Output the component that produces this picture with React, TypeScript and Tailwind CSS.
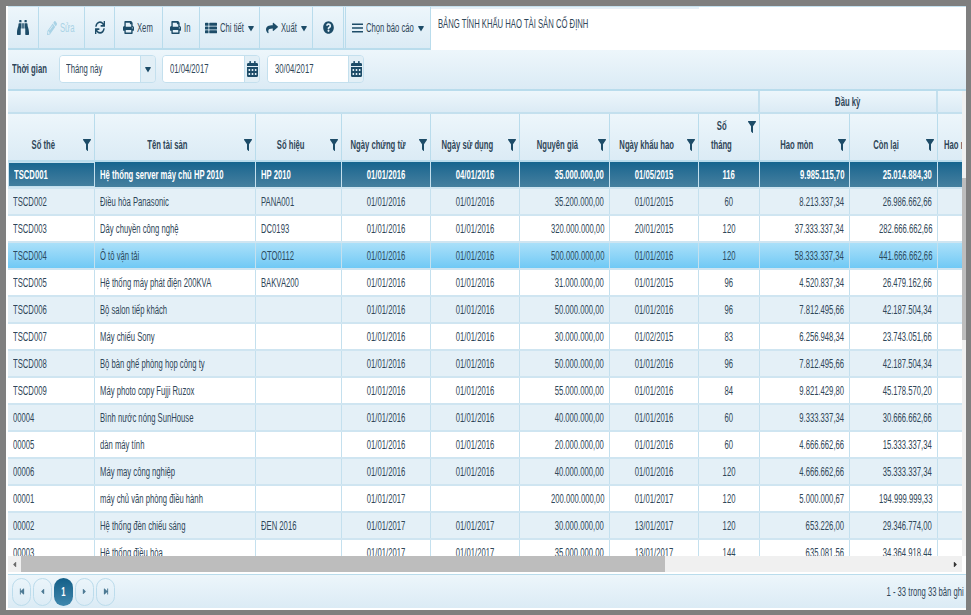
import React from 'react';
import {
  FaBinoculars, FaPencilAlt, FaSync, FaPrint, FaThList, FaShare, FaQuestionCircle, FaBars, FaFilter,
  FaCalendarAlt, FaStepBackward, FaStepForward, FaCaretLeft, FaCaretRight, FaCaretDown,
} from 'react-icons/fa';

const GRID = 'grid grid-cols-[87px_161px_86px_89px_89px_90px_89px_61px_90px_88px_24px] w-[954px]';
const BAR = 'bg-gradient-to-b from-[#edf6fb] to-[#dbebf5]';

const ORIGIN = { left: 'origin-left', center: 'origin-center', right: 'origin-right' };

// the screenshot is squeezed sideways, so text is narrowed the same way
function T({ children, align = 'left', className = '' }: { children: React.ReactNode; align?: 'left' | 'center' | 'right'; className?: string }) {
  return (
    <span className={`inline-block shrink-0 whitespace-nowrap text-[12px] scale-x-[0.64] ${ORIGIN[align]} ${className}`}>
      {children}
    </span>
  );
}

const HEADERS = [
  { label: 'Số thẻ' },
  { label: 'Tên tài sản' },
  { label: 'Số hiệu' },
  { label: 'Ngày chứng từ' },
  { label: 'Ngày sử dụng' },
  { label: 'Nguyên giá' },
  { label: 'Ngày khấu hao' },
  { label: 'Số', label2: 'tháng' },
  { label: 'Hao mòn' },
  { label: 'Còn lại' },
];

const ROWS = [
  ['TSCD001', 'Hệ thống server máy chủ HP 2010', 'HP 2010', '01/01/2016', '04/01/2016', '35.000.000,00', '01/05/2015', '116', '9.985.115,70', '25.014.884,30'],
  ['TSCD002', 'Điều hòa Panasonic', 'PANA001', '01/01/2016', '01/01/2016', '35.200.000,00', '01/01/2015', '60', '8.213.337,34', '26.986.662,66'],
  ['TSCD003', 'Dây chuyền công nghệ', 'DC0193', '01/01/2016', '01/01/2016', '320.000.000,00', '20/01/2015', '120', '37.333.337,34', '282.666.662,66'],
  ['TSCD004', 'Ô tô vận tải', 'OTO0112', '01/01/2016', '01/01/2016', '500.000.000,00', '01/01/2016', '120', '58.333.337,34', '441.666.662,66'],
  ['TSCD005', 'Hệ thống máy phát điện 200KVA', 'BAKVA200', '01/01/2016', '01/01/2016', '31.000.000,00', '01/01/2015', '96', '4.520.837,34', '26.479.162,66'],
  ['TSCD006', 'Bộ salon tiếp khách', '', '01/01/2016', '01/01/2016', '50.000.000,00', '01/01/2016', '96', '7.812.495,66', '42.187.504,34'],
  ['TSCD007', 'Máy chiếu Sony', '', '01/01/2016', '01/01/2016', '30.000.000,00', '01/02/2015', '83', '6.256.948,34', '23.743.051,66'],
  ['TSCD008', 'Bộ bàn ghế phòng họp công ty', '', '01/01/2016', '01/01/2016', '50.000.000,00', '01/01/2016', '96', '7.812.495,66', '42.187.504,34'],
  ['TSCD009', 'Máy photo copy Fujji Ruzox', '', '01/01/2016', '01/01/2016', '55.000.000,00', '01/01/2016', '84', '9.821.429,80', '45.178.570,20'],
  ['00004', 'Bình nước nóng SunHouse', '', '01/01/2016', '01/01/2016', '40.000.000,00', '01/01/2016', '60', '9.333.337,34', '30.666.662,66'],
  ['00005', 'dàn máy tính', '', '01/01/2016', '01/01/2016', '20.000.000,00', '01/01/2016', '60', '4.666.662,66', '15.333.337,34'],
  ['00006', 'Máy may công nghiệp', '', '01/01/2016', '01/01/2016', '40.000.000,00', '01/01/2016', '120', '4.666.662,66', '35.333.337,34'],
  ['00001', 'máy chủ văn phòng điều hành', '', '01/01/2017', '', '200.000.000,00', '01/01/2017', '120', '5.000.000,67', '194.999.999,33'],
  ['00002', 'Hệ thống đèn chiếu sáng', 'ĐEN 2016', '01/01/2017', '01/01/2017', '30.000.000,00', '13/01/2017', '120', '653.226,00', '29.346.774,00'],
  ['00003', 'Hệ thống điều hòa', '', '01/01/2017', '01/01/2017', '35.000.000,00', '13/01/2017', '144', '635.081,56', '34.364.918,44'],
];

function ToolButton({ width, icon, label, labelWidth = '', caret, disabled }: { width: string; icon: React.ReactNode; label?: string; labelWidth?: string; caret?: boolean; disabled?: boolean }) {
  return (
    <div className={`${width} h-full flex items-center justify-center gap-[3px] border-r border-[#b9dcec] ${disabled ? 'text-[#a9d3e6]' : 'text-[#1d4c68]'}`}>
      {icon}
      {label && (
        <div className={`${labelWidth} flex`}>
          <T className={disabled ? 'text-[#a9d3e6]' : 'text-[#2f4658]'}>{label}</T>
        </div>
      )}
      {caret && <FaCaretDown className="w-[6px] h-[16px]" preserveAspectRatio="none" />}
    </div>
  );
}

function DateBox({ value, width }: { value: string; width: string }) {
  return (
    <div className={`${width} h-[28px] flex rounded-[4px] border border-[#c4e0ee] overflow-hidden`}>
      <div className="flex-1 min-w-0 bg-white flex items-center pl-[7px]"><T className="text-[#2f4658]">{value}</T></div>
      <div className="w-[15px] flex items-center justify-center border-l border-[#c4e0ee] bg-[#e2eff6]">
        <FaCalendarAlt className="w-[11px] h-[16px] text-[#1d4c68]" preserveAspectRatio="none" />
      </div>
    </div>
  );
}

function PageButton({ children, active }: { children: React.ReactNode; active?: boolean }) {
  return (
    <div
      className={`w-[19px] h-[28px] rounded-full flex items-center justify-center font-bold ${
        active ? 'bg-gradient-to-b from-[#125f88] to-[#3f88ae] text-white' : 'border border-[#bcdcec] text-[#4d7a94]'
      }`}
    >
      {children}
    </div>
  );
}

export default function App() {
  return (
    <div className="w-[971px] h-[615px] bg-[#7f7f7f] pt-[6px] pl-[6px] pr-[5px] pb-[5px] overflow-hidden font-['Liberation_Sans',Arial,sans-serif]">
      <div className="w-full h-full bg-white pl-[2px] pb-[2px] flex flex-col">
        {/* Thanh công cụ */}
        <div className="h-[44px] flex shrink-0 border-t border-[#c4e0ee]">
          <div className={`flex h-[43px] border-b-2 border-[#b9dcec] ${BAR}`}>
            <ToolButton width="w-[31px]" icon={<FaBinoculars className="w-[12px] h-[17px]" preserveAspectRatio="none" />} />
            <ToolButton width="w-[46px]" disabled icon={<FaPencilAlt className="w-[10px] h-[14px]" preserveAspectRatio="none" />} label="Sửa" labelWidth="w-[16px]" />
            <ToolButton width="w-[30px]" icon={<FaSync className="w-[10px] h-[13px]" preserveAspectRatio="none" />} />
            <ToolButton width="w-[48px]" icon={<FaPrint className="w-[11px] h-[13px]" preserveAspectRatio="none" />} label="Xem" labelWidth="w-[17px]" />
            <ToolButton width="w-[37px]" icon={<FaPrint className="w-[11px] h-[13px]" preserveAspectRatio="none" />} label="In" labelWidth="w-[8px]" />
            <ToolButton width="w-[60px]" icon={<FaThList className="w-[12px] h-[12px]" preserveAspectRatio="none" />} label="Chi tiết" labelWidth="w-[25px]" caret />
            <ToolButton width="w-[53px]" icon={<FaShare className="w-[12px] h-[12px]" preserveAspectRatio="none" />} label="Xuất" labelWidth="w-[17px]" caret />
            <ToolButton width="w-[31px]" icon={<FaQuestionCircle className="w-[11px] h-[13px]" preserveAspectRatio="none" />} />
            <div className="w-[86px] ml-[1px] border-l border-[#b9dcec]">
              <ToolButton width="w-full" icon={<FaBars className="w-[11px] h-[12px]" preserveAspectRatio="none" />} label="Chọn báo cáo" labelWidth="w-[49px]" caret />
            </div>
          </div>
          <div className="flex-1 bg-white pl-[7px] pt-[8px] leading-[16px] relative">
            <div className="absolute left-0 top-0 w-[268px] h-[2px] bg-[#e6f1f8]" />
            <T className="text-[#2f4658]">BẢNG TÍNH KHẤU HAO TÀI SẢN CỐ ĐỊNH</T>
          </div>
        </div>

        {/* Bộ lọc thời gian */}
        <div className={`h-[41px] shrink-0 flex items-center pb-[2px] border-b-2 border-[#b9dcec] ${BAR}`}>
          <div className="ml-[4px] w-[47px] flex"><T className="font-bold text-[#2f4658]">Thời gian</T></div>
          <div className="w-[97px] h-[28px] flex rounded-[4px] border border-[#c4e0ee] overflow-hidden">
            <div className="flex-1 min-w-0 bg-white flex items-center pl-[6px]"><T className="text-[#2f4658]">Tháng này</T></div>
            <div className="w-[15px] flex items-center justify-center border-l border-[#c4e0ee] bg-[#e2eff6]">
              <FaCaretDown className="w-[6px] h-[16px] text-[#1d4c68]" preserveAspectRatio="none" />
            </div>
          </div>
          <div className="ml-[6px]"><DateBox value="01/04/2017" width="w-[98px]" /></div>
          <div className="ml-[7px]"><DateBox value="30/04/2017" width="w-[97px]" /></div>
        </div>

        {/* Bảng dữ liệu */}
        <div className="flex-1 min-h-0 flex">
          <div className="flex-1 min-w-0 overflow-hidden">
            <div className={`${GRID} h-[23px] ${BAR} border-b-2 border-[#c4e0ee]`}>
              <div className="col-span-8 border-r-2 border-[#c4e0ee]" />
              <div className="col-span-2 flex items-center justify-center border-r-2 border-[#c4e0ee]"><T align="center" className="font-bold text-[#2f4658]">Đầu kỳ</T></div>
              <div />
            </div>
            <div className={`${GRID} h-[48px] ${BAR} border-b-2 border-[#b9dcec]`}>
              {HEADERS.map((h) => (
                <div key={h.label} className="flex border-r border-[#b9dcec] pr-[3px]">
                  <div className="flex-1 min-w-0 self-end pb-[5px] pr-[4px] flex flex-col items-center leading-[19px]">
                    <T align="center" className="font-bold text-[#2f4658]">{h.label}</T>
                    {h.label2 && <T align="center" className="font-bold text-[#2f4658]">{h.label2}</T>}
                  </div>
                  <FaFilter className={`w-[8px] h-[12px] text-[#1d4c68] shrink-0 self-end ${h.label2 ? 'mb-[27px]' : 'mb-[9px]'}`} preserveAspectRatio="none" />
                </div>
              ))}
              <div className="pl-[6px] pb-[5px] self-end leading-[19px] flex overflow-hidden"><T className="font-bold text-[#2f4658]">Hao mòn</T></div>
            </div>
            {ROWS.map((row, i) => {
              const selected = i === 0;
              const hovered = i === 3;
              const rowClass = selected
                ? 'bg-gradient-to-b from-[#14658f] to-[#45809f] text-white font-bold'
                : hovered
                  ? 'bg-gradient-to-b from-[#aae0f9] to-[#6fc9f5] text-[#2c4a5e]'
                  : i % 2 === 1
                    ? 'bg-[#e4f0f7] text-[#2f4658]'
                    : 'bg-white text-[#2f4658]';
              return (
                <div key={row[0]} className={`${GRID} h-[27px] border-b-2 border-[#cfe5f1] ${rowClass}`}>
                  {row.map((cell, c) => {
                    const align = c < 3 ? 'left' : c === 3 || c === 4 || c === 6 || c === 7 ? 'center' : 'right';
                    return (
                      <div
                        key={c}
                        className={`flex items-center overflow-hidden border-r border-[#c4e0ee] ${
                          align === 'left' ? 'justify-start pl-[5px]' : align === 'center' ? 'justify-center' : 'justify-end pr-[5px]'
                        } ${selected && c === 0 ? 'border border-[#5aa3c8]' : ''}`}
                      >
                        {cell && <T align={align}>{cell}</T>}
                      </div>
                    );
                  })}
                  <div />
                </div>
              );
            })}
          </div>
          <div className="w-[4px] shrink-0 bg-[#f0f0f0]">
            <div className="mt-[87px] h-[162px] bg-[#bdbdbd]" />
          </div>
        </div>

        {/* Thanh cuộn ngang */}
        <div className="h-[18px] shrink-0 pb-[2px] pr-[4px] bg-white">
          <div className="h-full flex items-center bg-[#f0f0f0] text-[#6b6b6b]">
            <div className="w-[13px] flex justify-center"><FaCaretLeft className="w-[7px] h-[9px]" /></div>
            <div className="w-[644px] h-full bg-[#bdbdbd]" />
            <div className="flex-1 flex justify-end pr-[3px] text-[#333333]"><FaCaretRight className="w-[7px] h-[9px]" /></div>
          </div>
        </div>

        {/* Phân trang */}
        <div className={`h-[34px] shrink-0 flex items-center justify-between border-t border-[#b9dcec] pl-[4px] pr-[2px] ${BAR}`}>
          <div className="flex items-center gap-[2px]">
            <PageButton><FaStepBackward className="w-[6px] h-[7px]" /></PageButton>
            <PageButton><FaCaretLeft className="w-[7px] h-[9px]" /></PageButton>
            <PageButton active><T align="center">1</T></PageButton>
            <PageButton><FaCaretRight className="w-[7px] h-[9px]" /></PageButton>
            <PageButton><FaStepForward className="w-[6px] h-[7px]" /></PageButton>
          </div>
          <div className="flex justify-end"><T align="right" className="text-[#2f4658]">1 - 33 trong 33 bản ghi</T></div>
        </div>
      </div>
    </div>
  );
}
